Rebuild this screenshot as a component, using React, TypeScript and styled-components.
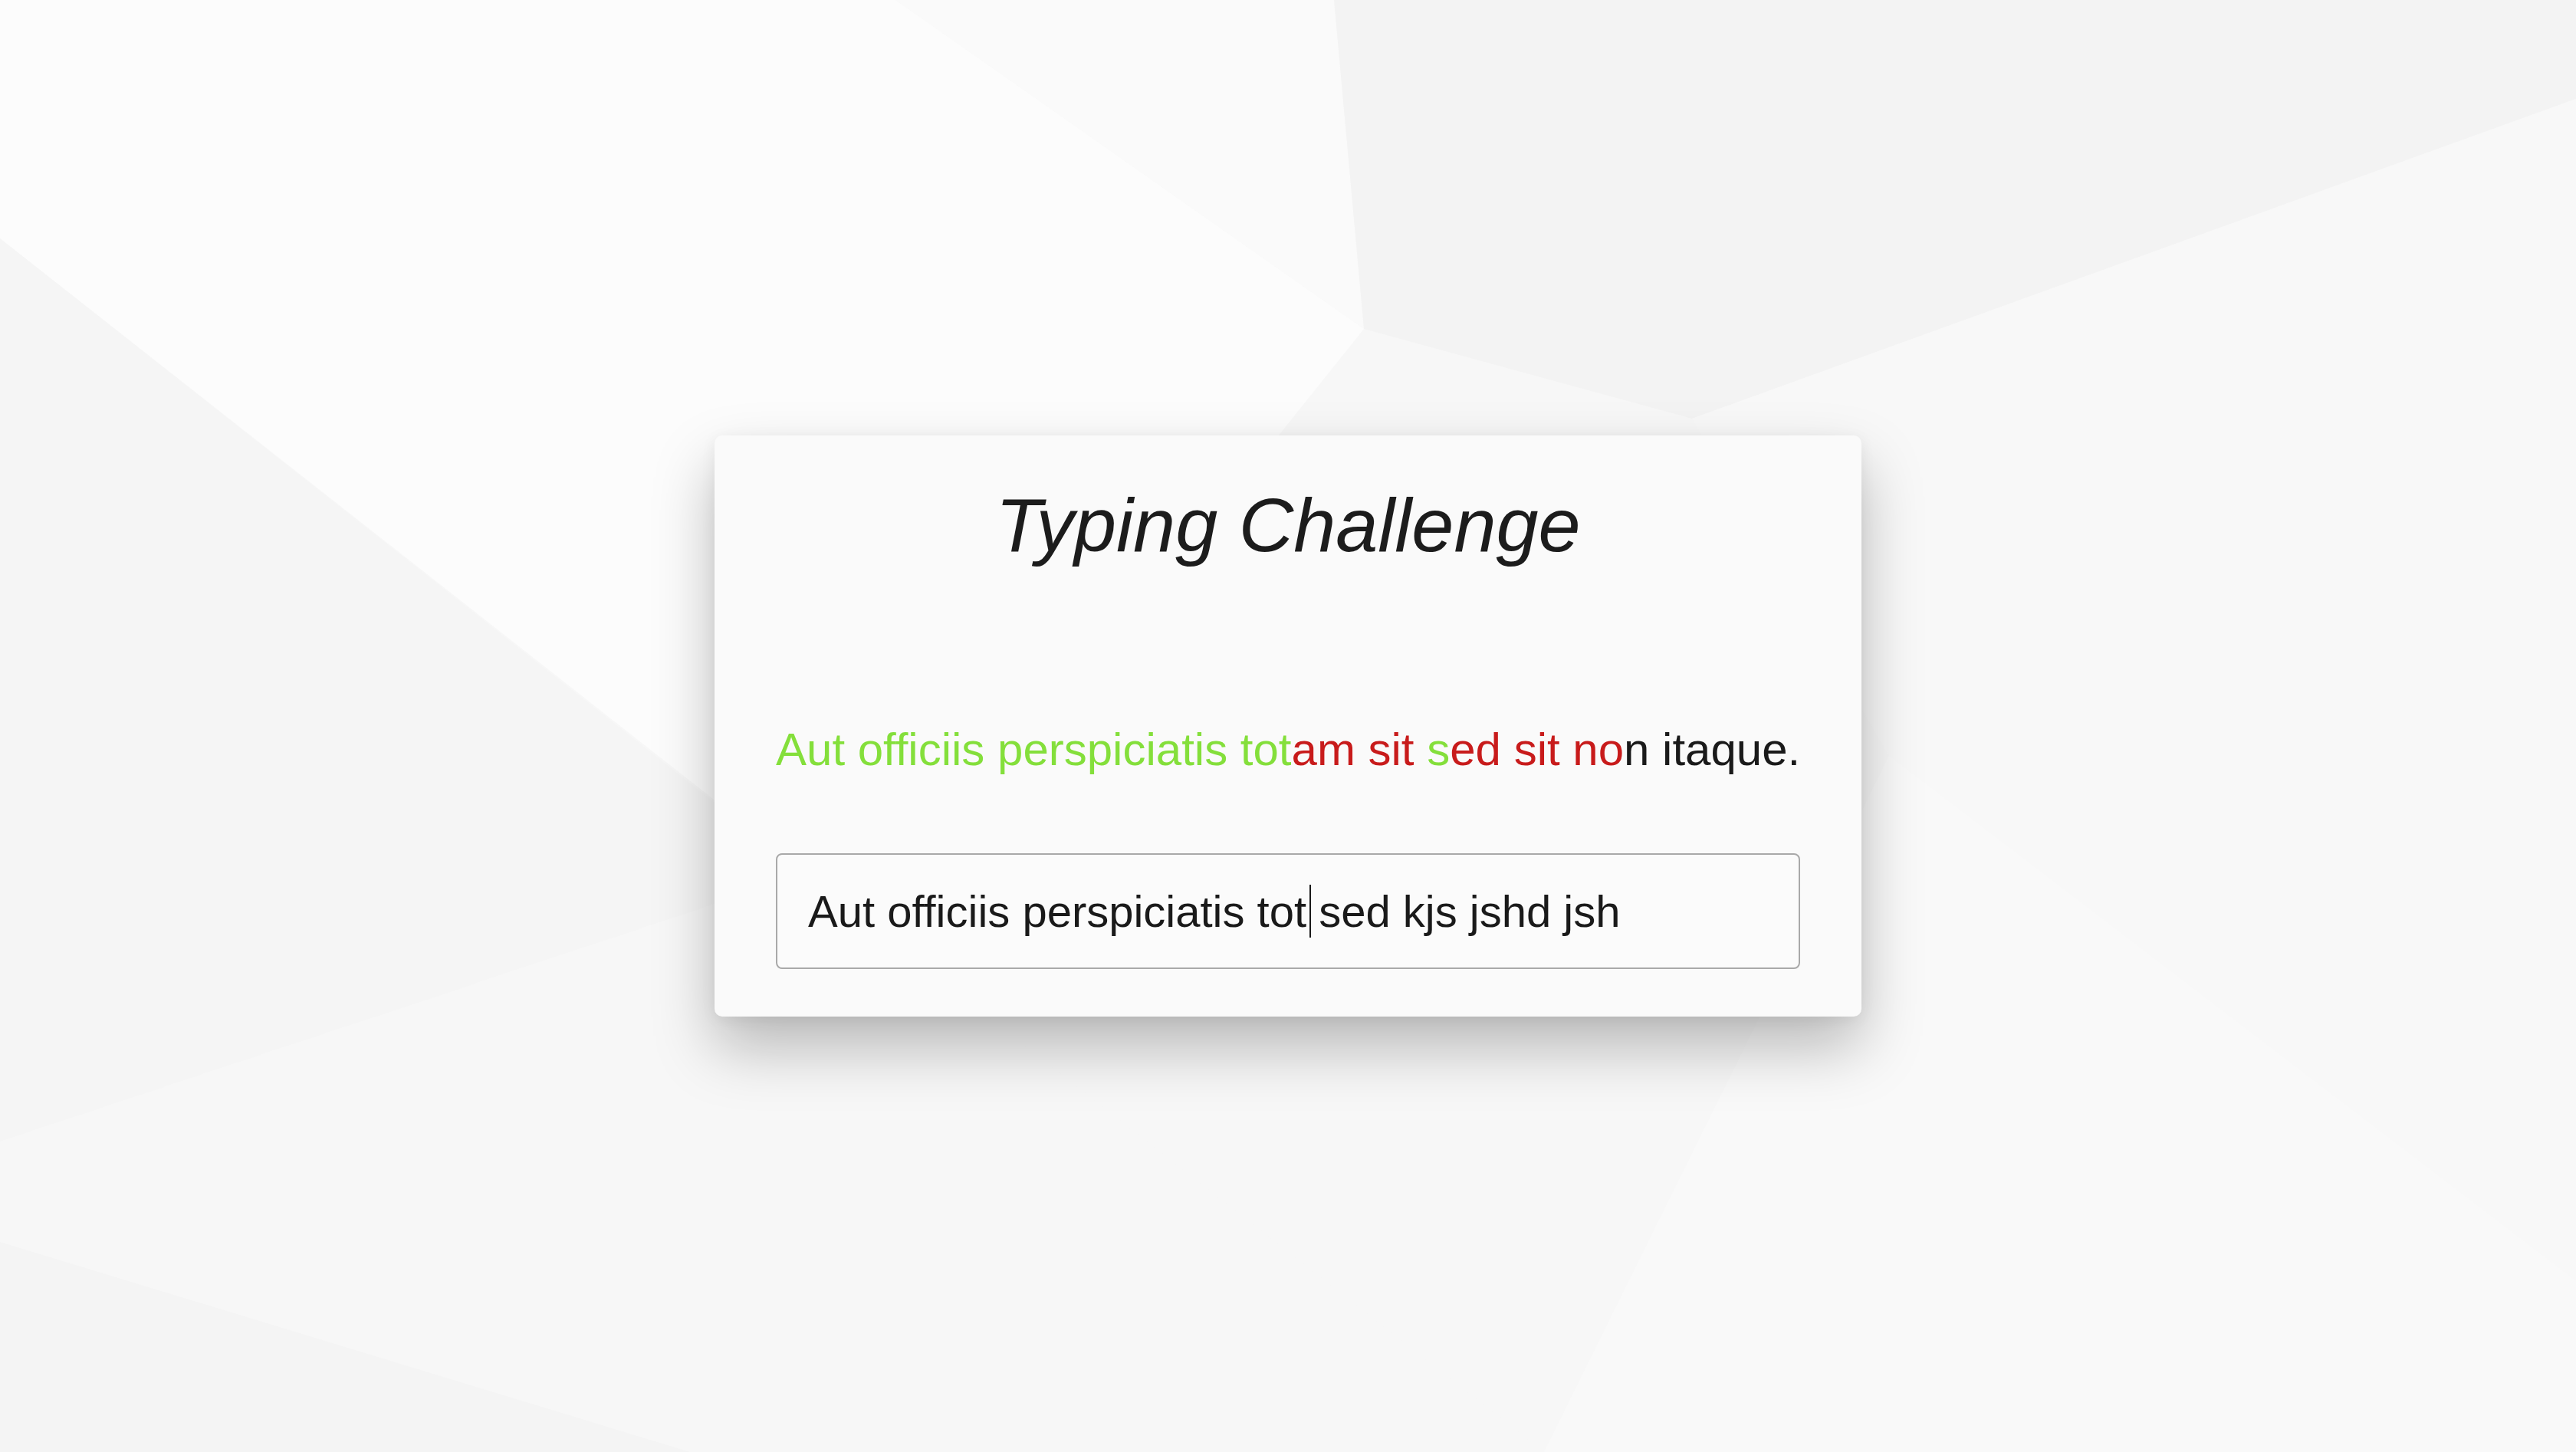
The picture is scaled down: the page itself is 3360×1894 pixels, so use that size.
import styled, { createGlobalStyle } from 'styled-components';

const target = 'Aut officiis perspiciatis totam sit sed sit non itaque.';
const typed = 'Aut officiis perspiciatis tot sed kjs jshd jsh';
const cursorAt = 29;

const GlobalStyle = createGlobalStyle`
  html, body {
    margin: 0;
    padding: 0;
    background: #f7f7f7;
    font-family: "Liberation Sans", Arial, sans-serif;
  }
`;

const Page = styled.main`
  position: relative;
  min-height: 100vh;
  display: flex;
  align-items: center;
  justify-content: center;
  overflow: hidden;
`;

const Backdrop = styled.svg`
  position: absolute;
  inset: 0;
  width: 100%;
  height: 100%;
  z-index: 0;
`;

const Card = styled.section`
  position: relative;
  z-index: 1;
  width: 1496px;
  box-sizing: border-box;
  padding: 60px 80px 62px;
  background: #fafafa;
  border-radius: 10px;
  box-shadow: 0 40px 80px rgba(0, 0, 0, 0.26), 0 4px 20px rgba(0, 0, 0, 0.06);
  display: flex;
  flex-direction: column;
`;

const Title = styled.h1`
  margin: 0;
  text-align: center;
  font-size: 99px;
  line-height: 1.15;
  font-style: italic;
  font-weight: 400;
  color: #1c1c1c;
`;

const Sentence = styled.p`
  margin: 201px 0 0;
  font-size: 60px;
  line-height: 1.15;
  white-space: nowrap;
  color: #1a1a1a;
`;

const Mark = styled.span<{ $state: 'ok' | 'bad' | 'todo' }>`
  color: ${(p) => (p.$state === 'ok' ? '#84df3b' : p.$state === 'bad' ? '#c81b1b' : '#1a1a1a')};
`;

const Field = styled.div`
  position: relative;
  margin-top: 101px;
`;

const Input = styled.input`
  display: block;
  width: 100%;
  height: 151px;
  box-sizing: border-box;
  padding: 0 40px;
  border: 2px solid #a9a9a9;
  border-radius: 8px;
  background: #fbfbfb;
  font-family: "Liberation Sans", Arial, sans-serif;
  font-size: 58px;
  color: #1a1a1a;
  caret-color: transparent;
  outline: none;
`;

const CaretLayer = styled.div`
  position: absolute;
  inset: 0;
  padding: 0 42px;
  display: flex;
  align-items: center;
  pointer-events: none;
  font-size: 58px;
  white-space: pre;
`;

const Ghost = styled.span`
  color: transparent;
`;

const Caret = styled.span`
  width: 2px;
  height: 69px;
  margin-left: 4px;
  background: #1a1a1a;
`;

type Part = { text: string; state: 'ok' | 'bad' | 'todo' };

const splitSentence = (): Part[] => {
  const parts: Part[] = [];
  for (let i = 0; i < target.length; i++) {
    const state: Part['state'] = i >= typed.length ? 'todo' : typed[i] === target[i] ? 'ok' : 'bad';
    const last = parts[parts.length - 1];
    if (last && last.state === state) last.text += target[i];
    else parts.push({ text: target[i], state });
  }
  return parts;
};

const App = () => {
  const parts = splitSentence();
  return (
    <>
      <GlobalStyle />
      <Page>
        <Backdrop viewBox="0 0 3360 1894" preserveAspectRatio="none">
          <rect x="0" y="0" width="3360" height="1894" fill="#f7f7f7" />
          <polygon points="0,0 1168,0 1779,429 1150,1215 0,311" fill="#fcfcfc" />
          <polygon points="1168,0 1740,0 1779,429" fill="#fafafa" />
          <polygon points="1740,0 3360,0 3360,129 2207,546 1779,429" fill="#f3f3f3" />
          <polygon points="0,311 1050,1140 0,1489" fill="#f5f5f5" />
          <polygon points="0,1489 1050,1140 2014,1894 0,1894" fill="#f7f7f7" />
          <polygon points="0,1620 900,1894 0,1894" fill="#f4f4f4" />
          <polygon points="2207,546 3360,129 3360,1671 2464,986" fill="#f8f8f8" />
          <polygon points="2464,986 3360,1671 3360,1894 2014,1894" fill="#f9f9f9" />
        </Backdrop>
        <Card>
          <Title>Typing Challenge</Title>
          <Sentence>
            {parts.map((p, i) => (
              <Mark key={i} $state={p.state}>
                {p.text}
              </Mark>
            ))}
          </Sentence>
          <Field>
            <Input type="text" defaultValue={typed} spellCheck={false} />
            <CaretLayer>
              <Ghost>{typed.slice(0, cursorAt)}</Ghost>
              <Caret />
            </CaretLayer>
          </Field>
        </Card>
      </Page>
    </>
  );
};

export default App;
